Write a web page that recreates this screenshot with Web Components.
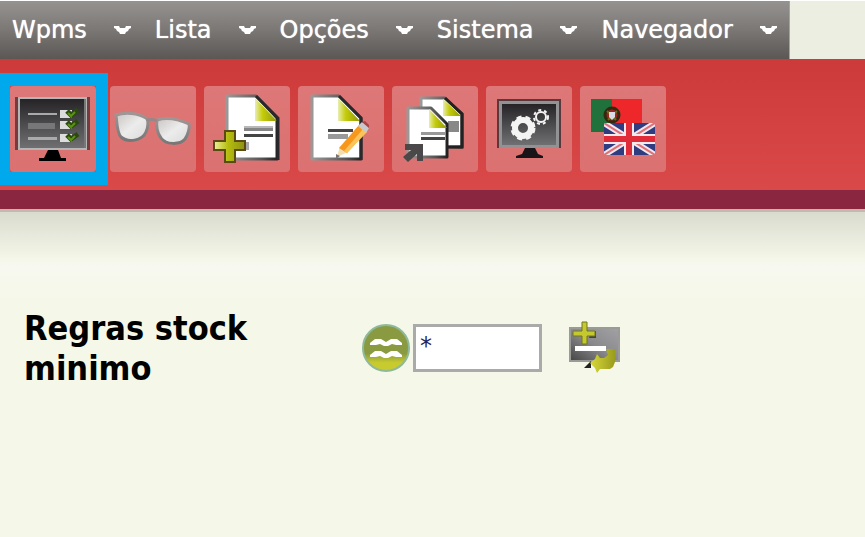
<!DOCTYPE html>
<html lang="pt">
<head>
<meta charset="utf-8">
<meta name="viewport" content="width=device-width, initial-scale=1">
<title>Wpms</title>
<style>
  body {
    margin: 0;
    min-height: 100vh;
    background: #f5f8e9;
    font-family: "DejaVu Sans Condensed", "DejaVu Sans", sans-serif;
  }
</style>
</head>
<body>
<app-menu>
  <menu-item>Wpms</menu-item>
  <menu-item>Lista</menu-item>
  <menu-item>Opções</menu-item>
  <menu-item>Sistema</menu-item>
  <menu-item>Navegador</menu-item>
</app-menu>

<tool-bar>
  <tool-button slot="active" label="Lista de regras">
    <svg viewBox="0 0 86 86">
      <defs>
        <linearGradient id="screen" x1="0" y1="0" x2="0" y2="1"><stop offset="0" stop-color="#252325"/><stop offset="1" stop-color="#707072"/></linearGradient>
      </defs>
      <path fill="#743c3f" d="M5 11h75v53H5z"/>
      <path fill="#b5b5b5" d="M8 11h69v53H8z"/>
      <path fill="url(#screen)" d="M10 13h64v49H10z"/>
      <path fill="#777" d="M74 13h2v49h-2z"/>
      <path fill="#aaa" d="M18 27h29v2H18zM18 51h29v3H18z"/>
      <path fill="#77777a" d="M18 37h27v6H18z"/>
      <path fill="#ddd" d="M50 24h12v8H50zM50 35h12v8H50zM50 48h12v8H50z"/>
      <g fill="none" stroke="#2b4a10" stroke-width="5"><path d="M57 25l4 4 7-5M57 36l4 4 7-5M57 49l4 4 7-5"/></g>
      <g fill="none" stroke="#5c9312" stroke-width="2"><path d="M58 27l3 3 4-4M58 38l3 3 4-4M58 51l3 3 4-4"/></g>
      <path d="M38 64h10l3 8h5v3H29v-3h5z"/>
    </svg>
  </tool-button>
  <tool-button label="Ver">
    <svg viewBox="0 0 86 86">
      <defs>
        <linearGradient id="lens" x1="0" y1="0" x2="1" y2="1"><stop offset="0" stop-color="#c9c5c2"/><stop offset=".5" stop-color="#ececec"/><stop offset="1" stop-color="#d9d9d9"/></linearGradient>
        <linearGradient id="rim" x1="0" y1="0" x2="0" y2="1"><stop offset="0" stop-color="#a09696"/><stop offset="1" stop-color="#777"/></linearGradient>
      </defs>
      <g fill="url(#lens)" stroke="url(#rim)" stroke-width="3">
        <path d="M6 29c9-3 22-2 30 3 3 2 2 10 0 14-4 9-18 11-25 5-4-4-4-14-5-22z"/>
        <path d="M47 34c9-3 21-1 32 4 1 3-1 11-4 15-5 6-19 6-24-1-4-5-5-13-4-18z"/>
      </g>
      <path fill="none" stroke="#968888" stroke-width="3" d="M37 34c4-1 7-1 10 1"/>
    </svg>
  </tool-button>
  <tool-button label="Adicionar">
    <svg viewBox="0 0 86 86">
      <defs>
        <linearGradient id="fold" x1="0" y1="0" x2="1" y2="0"><stop offset="0" stop-color="#e9edb0"/><stop offset=".35" stop-color="#c5cc0a"/><stop offset="1" stop-color="#92990c"/></linearGradient>
        <linearGradient id="edge" x1="0" y1="0" x2="1" y2="0"><stop offset="0" stop-color="#999"/><stop offset=".7" stop-color="#555"/><stop offset="1" stop-color="#222"/></linearGradient>
        <linearGradient id="cross" x1="0" y1="0" x2="1" y2="0"><stop offset="0" stop-color="#eef09a"/><stop offset=".45" stop-color="#b6bd0e"/><stop offset="1" stop-color="#8c9214"/></linearGradient>
      </defs>
      <path fill="#fff" stroke="url(#edge)" stroke-width="3" stroke-linejoin="round" d="M23 10h29l21 22v41H23z"/>
      <path fill="url(#fold)" d="M51 12v23h22z"/>
      <path fill="none" stroke="#29292d" stroke-width="3" d="M52 10l22 22v42"/>
      <path fill="#b8b8b8" d="M40 40h29v2H40z"/>
      <path fill="#858585" d="M40 42h29v3H40z"/>
      <path fill="#444" d="M40 48h29v3H40z"/>
      <path fill="#aaa" d="M42 56h3v8h-3z"/>
      <path fill="url(#cross)" stroke="#5b4a16" stroke-width="2" d="M21 45h10v10h10v9H31v12H21V64H10v-9h11z"/>
    </svg>
  </tool-button>
  <tool-button label="Editar">
    <svg viewBox="0 0 86 86">
      <path fill="#fff" stroke="url(#edge)" stroke-width="3" stroke-linejoin="round" d="M14 10h27l22 22v41H14z"/>
      <path fill="url(#fold)" d="M40 12v23h22z"/>
      <path fill="none" stroke="#29292d" stroke-width="3" d="M41 10l22 22v42"/>
      <path fill="#444" d="M30 43h25v3H30z"/>
      <path fill="#999" d="M30 48h20v5H30z"/>
      <path fill="#f3dfb2" d="M39 71l3-11 8 6z"/>
      <path fill="#f7981d" d="M41 62l20-23 8 6-20 22z"/>
      <path fill="#fbc45a" d="M46 65l19-22 4 3-20 21z"/>
      <path fill="#c9c9cc" d="M60 40l4-4 7 6-3 5z"/>
      <path fill="#a8444a" d="M64 36l3-1 4 4v3z"/>
      <path fill="#777" d="M38 68l4 2-4 3z"/>
    </svg>
  </tool-button>
  <tool-button label="Duplicar">
    <svg viewBox="0 0 86 86">
      <path fill="#fff" stroke="url(#edge)" stroke-width="3" stroke-linejoin="round" d="M29 12h24l17 16v33H29z"/>
      <path fill="url(#fold)" d="M51 13v17h18z"/>
      <path fill="none" stroke="#222" stroke-width="3" d="M53 12l17 16v33H55"/>
      <path fill="#888" d="M56 35h11v11H56z"/>
      <path fill="#fff" stroke="url(#edge)" stroke-width="3" stroke-linejoin="round" d="M16 22h23l16 16v33H16z"/>
      <path fill="url(#fold)" d="M37 23v19h18z"/>
      <path fill="#999" d="M29 46h24v3H29z"/>
      <path fill="#444" d="M29 51h24v3H29z"/>
      <path fill="#4a4848" d="M13 58h18v17h-6v-7l-9 8-5-5 8-7h-6z"/>
    </svg>
  </tool-button>
  <tool-button label="Configurar">
    <svg viewBox="0 0 86 86">
      <path fill="#59393c" d="M11 13h64v49H11z"/>
      <path fill="#929294" d="M13 15h60v47H13z"/>
      <path fill="url(#screen)" d="M16 18h54v41H16z"/>
      <g fill="none" stroke="#f4f4f4">
        <circle cx="37" cy="42" r="8" stroke-width="6"/>
        <circle cx="37" cy="42" r="11" stroke-width="3" stroke-dasharray="5 4"/>
        <circle cx="55" cy="31" r="5" stroke-width="2"/>
        <circle cx="55" cy="31" r="7" stroke-width="2" stroke-dasharray="3 3"/>
      </g>
      <path fill="#181418" d="M39 62h10l3 6 5 2v2H30v-2l6-2z"/>
    </svg>
  </tool-button>
  <tool-button label="Idioma">
    <svg viewBox="0 0 86 86">
      <path fill="#ee272b" d="M11 13h51v33H11z"/>
      <path fill="#21713d" d="M11 13h21v33H11z"/>
      <circle cx="32" cy="29" r="7" fill="#9b2420" stroke="#302a10" stroke-width="3"/>
      <path fill="none" stroke="#6f6c12" stroke-width="2" d="M27 25l9 9M37 25l-9 9"/>
      <path fill="#d9dce5" d="M29 26h6v5l-3 3-3-3z"/>
      <svg x="24" y="37" width="51" height="32" viewBox="0 0 51 32">
        <path fill="#2f3c80" d="M0 0h51v32H0z"/>
        <path stroke="#f2e8ee" stroke-width="6" d="M0 0l51 32M51 0L0 32"/>
        <path stroke="#df6f78" stroke-width="2" d="M0 0l51 32M51 0L0 32"/>
        <path stroke="#f5e9ee" stroke-width="10" d="M25 0v32M0 16h51"/>
        <path stroke="#e02c38" stroke-width="6" d="M25 0v32M0 16h51"/>
      </svg>
    </svg>
  </tool-button>
</tool-bar>

<filter-row label="Regras stock minimo" value="*"></filter-row>

<script>
class AppMenu extends HTMLElement {
  connectedCallback() {
    this.attachShadow({ mode: 'open' });
    this.shadowRoot.innerHTML = `
      <style>
        :host {
          display: flex;
          background: #ebeee1;
          border-top: 1px solid #fff;
        }
        nav {
          display: flex;
          height: 58px;
          box-sizing: border-box;
          border-right: 1px solid #a5a5a0;
          background: linear-gradient(#959391, #7b7775 50%, #5b5754);
        }
      </style>
      <nav><slot></slot></nav>
    `;
  }
}
customElements.define('app-menu', AppMenu);

class MenuItem extends HTMLElement {
  connectedCallback() {
    this.attachShadow({ mode: 'open' });
    this.shadowRoot.innerHTML = `
      <style>
        :host {
          display: block;
        }
        button {
          display: flex;
          align-items: center;
          gap: 27px;
          height: 100%;
          padding: 0 12px;
          border: 0;
          background: none;
          color: #fff;
          font-family: "DejaVu Sans", sans-serif;
          font-size: 24px;
          line-height: 32px;
          text-shadow: 0 0 1px #fff;
          cursor: pointer;
        }
        svg {
          width: 17px;
          height: 9px;
        }
      </style>
      <button type="button" aria-haspopup="true">
        <slot></slot>
        <svg viewBox="0 0 17 9" aria-hidden="true"><path fill="#fff" d="M0 0h5l1 2h5l1-2h5v2l-2 1-1 2-2 1-1 2H6L5 6 3 5 2 3 0 2z"/></svg>
      </button>
    `;
  }
}
customElements.define('menu-item', MenuItem);

class ToolBar extends HTMLElement {
  connectedCallback() {
    this.attachShadow({ mode: 'open' });
    this.shadowRoot.innerHTML = `
      <style>
        :host {
          display: block;
        }
        .bar {
          display: flex;
          align-items: center;
          gap: 2px;
          padding: 14px 0 5px;
          background: linear-gradient(#cd3a3a, #da4949);
          border-bottom: 19px solid #8a2640;
        }
        .active {
          padding: 13px 12px 13px 10px;
          background: #00a8ec;
        }
        .tools {
          display: flex;
          gap: 8px;
        }
        .shade {
          height: 88px;
          border-top: 3px solid #c7b8ae;
          background: linear-gradient(#d8dbcd, #f3f6e7 50%, #f7f8f0 62%, #f5f8e9);
        }
      </style>
      <div class="bar">
        <div class="active"><slot name="active"></slot></div>
        <div class="tools"><slot></slot></div>
      </div>
      <div class="shade"></div>
    `;
  }
}
customElements.define('tool-bar', ToolBar);

class ToolButton extends HTMLElement {
  connectedCallback() {
    this.attachShadow({ mode: 'open' });
    this.shadowRoot.innerHTML = `
      <style>
        :host {
          display: block;
        }
        button {
          display: block;
          width: 86px;
          height: 86px;
          padding: 0;
          border: 0;
          border-radius: 4px;
          background: linear-gradient(#de7777, #db7171);
          cursor: pointer;
        }
        :host([slot="active"]) {
          background: #da4949;
        }
        ::slotted(svg) {
          display: block;
          width: 100%;
          height: 100%;
        }
      </style>
      <button type="button" aria-label="${this.getAttribute('label')}"><slot></slot></button>
    `;
  }
}
customElements.define('tool-button', ToolButton);

class FilterRow extends HTMLElement {
  connectedCallback() {
    this.attachShadow({ mode: 'open' });
    this.shadowRoot.innerHTML = `
      <style>
        :host {
          display: flex;
          align-items: center;
          padding: 8px 24px;
        }
        label {
          flex: 0 1 338px;
          color: #000;
          font-size: 34px;
          font-weight: bold;
          line-height: 40px;
        }
        span {
          display: block;
          max-width: 260px;
        }
        button {
          display: block;
          padding: 0;
          border: 0;
          background: none;
          cursor: pointer;
        }
        svg {
          display: block;
        }
        input {
          box-sizing: border-box;
          width: 129px;
          height: 48px;
          margin: 0 26px 0 2px;
          padding: 0 4px 4px;
          border: 3px solid #aaa;
          background: #fff;
          color: #23235c;
          font-family: "DejaVu Sans", sans-serif;
          font-size: 24px;
        }
      </style>
      <label for="rule"><span>${this.getAttribute('label')}</span></label>
      <button type="button" aria-label="Operador">
        <svg width="49" height="49" viewBox="0 0 49 49">
          <defs><linearGradient id="g" x1="0" y1="0" x2="0" y2="1"><stop offset=".62" stop-color="#8a9a40"/><stop offset=".82" stop-color="#c8cb2e"/></linearGradient></defs>
          <circle cx="24" cy="24" r="23" fill="url(#g)" stroke="#8fb99a" stroke-width="2"/>
          <path fill="#fff" d="M8 19l5-4h6l5 3 5-3h6l5 4v2h-6l-4-1-4 2h-4l-4-2-4 1H8zM8 31l5-4h6l5 3 5-3h6l5 4v2h-6l-4-1-4 2h-4l-4-2-4 1H8z"/>
        </svg>
      </button>
      <input id="rule" type="text" value="${this.getAttribute('value')}">
      <button type="button" aria-label="Adicionar regra">
        <svg width="55" height="54" viewBox="0 0 55 54">
          <defs>
            <linearGradient id="p" x1="0" y1="1" x2="1" y2="0"><stop offset="0" stop-color="#444"/><stop offset=".5" stop-color="#8a8a8d"/><stop offset="1" stop-color="#a2a2a6"/></linearGradient>
            <linearGradient id="a" x1="0" y1="0" x2="1" y2="0"><stop offset="0" stop-color="#d8d93a"/><stop offset="1" stop-color="#9a9c1c"/></linearGradient>
          </defs>
          <path fill="url(#p)" stroke="#9a9a98" stroke-width="2" d="M2 7h49v33H2z"/>
          <path fill="#fff" d="M7 25h31v5H7z"/>
          <path fill="#444" d="M23 10h5v7h-7z"/>
          <path fill="#222" d="M16 47l7-7v7z"/>
          <path fill="#c4c92e" stroke="#72761c" d="M14 1h5v9h8v5h-8v8h-5v-8H5v-5h9z"/>
          <path fill="url(#a)" d="M38 28h9v13l-2 5-3 2H32l-3 4-2-5-5-5 5-4 2-5 3 4h4l4-3z"/>
        </svg>
      </button>
    `;
  }
}
customElements.define('filter-row', FilterRow);
</script>
</body>
</html>
